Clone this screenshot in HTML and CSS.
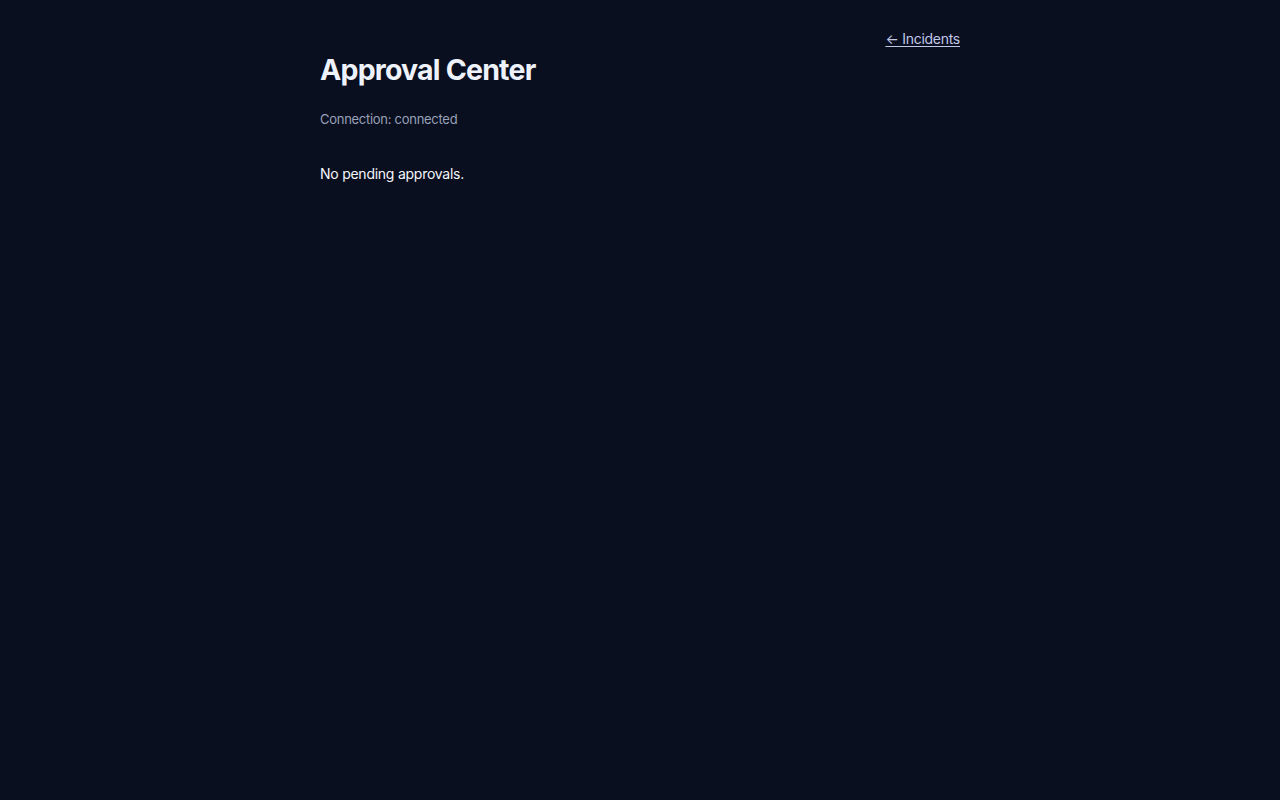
FILE: index.html
```html
<!DOCTYPE html>
<html lang="en">
<head>
<meta charset="utf-8">
<title>Approval Center</title>
<link rel="stylesheet" href="styles.css">
</head>
<body>
<main class="page">
  <nav class="topnav"><a class="back-link" href="#">← Incidents</a></nav>
  <h1 class="title">Approval Center</h1>
  <p class="status">Connection: connected</p>
  <p class="empty">No pending approvals.</p>
</main>
</body>
</html>
```
FILE: styles.css
```css
html, body {
  margin: 0;
  padding: 0;
  background: #0a0f1f;
  min-height: 100%;
}
body {
  font-family: Inter, "Noto Sans", sans-serif;
  color: #f1f5f9;
}
.page {
  max-width: 640px;
  margin: 0 auto;
  padding-top: 29px;
}
.topnav {
  display: flex;
  justify-content: flex-end;
  line-height: 20px;
  font-size: 14px;
  letter-spacing: -0.27px;
}
.back-link {
  color: #c0c8e8;
  text-decoration: underline;
  text-underline-offset: 2px;
}
.title {
  margin: 3px 0 0;
  font-size: 28.5px;
  line-height: 36px;
  font-weight: 700;
  color: #eef2fb;
  letter-spacing: -0.8px;
}
.status {
  margin: 22px 0 0;
  font-size: 13px;
  line-height: 18px;
  color: #97a1b8;
  letter-spacing: -0.28px;
}
.empty {
  margin: 35px 0 0;
  font-size: 14px;
  line-height: 22px;
  color: #f4f6fb;
  letter-spacing: -0.25px;
}
```
